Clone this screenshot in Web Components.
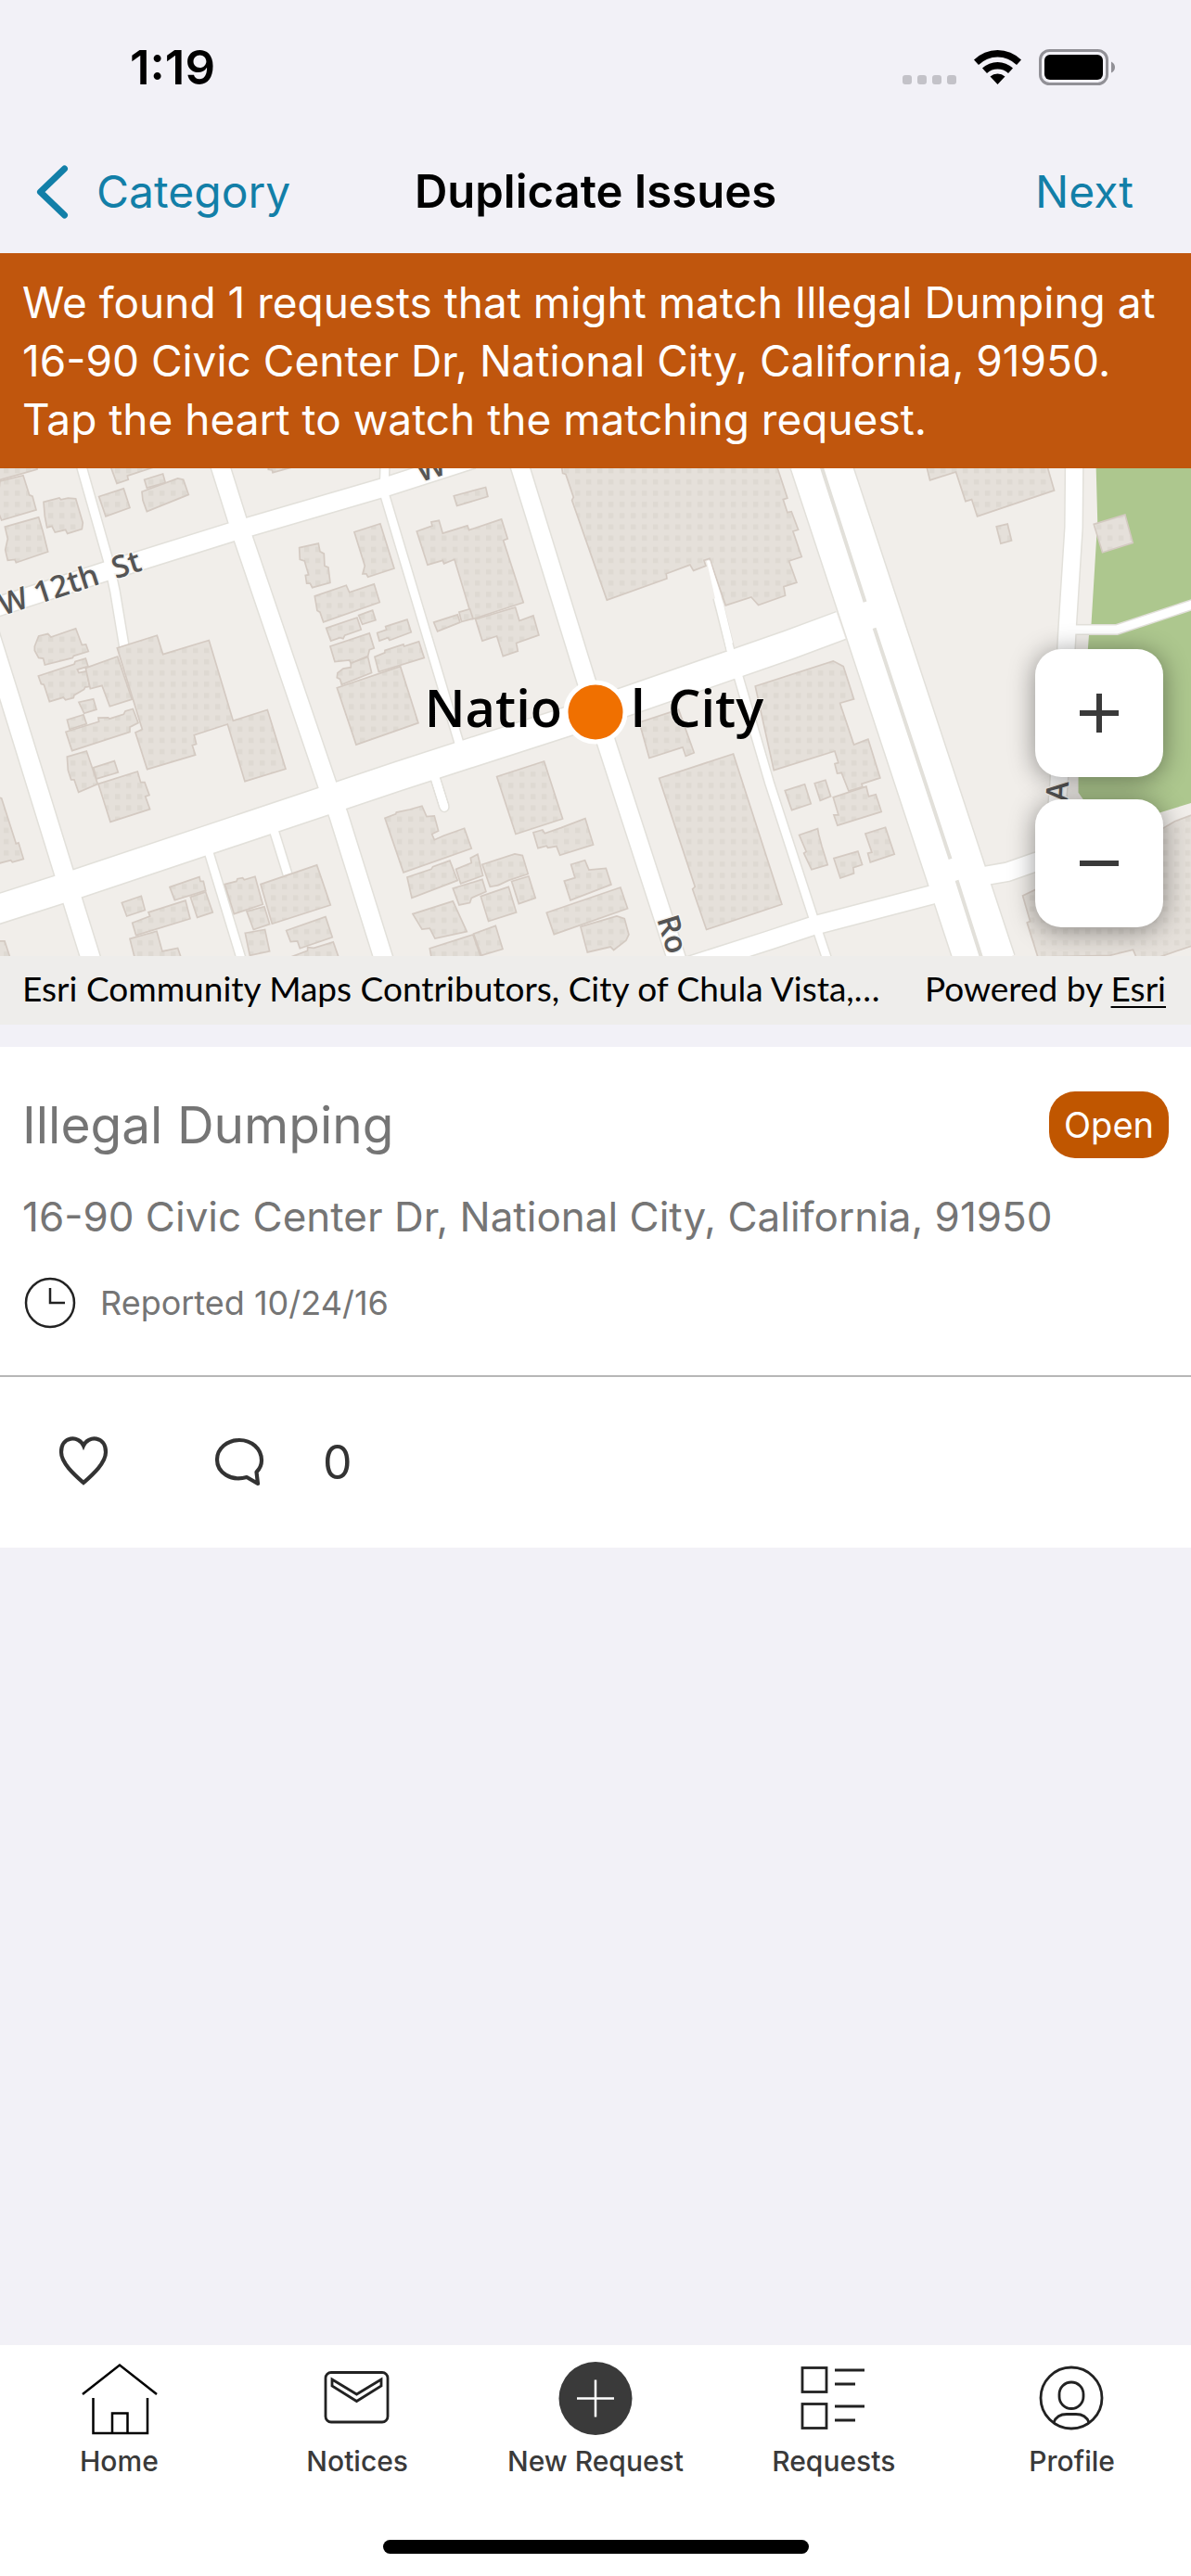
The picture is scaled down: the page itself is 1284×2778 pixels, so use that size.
<!DOCTYPE html>
<html lang="en">
<head>
<meta charset="utf-8">
<meta name="viewport" content="width=device-width, initial-scale=1">
<title>Duplicate Issues</title>
<style>
  body {
    margin: 0;
    font-family: Inter, "Liberation Sans", sans-serif;
    background: #f2f1f7;
    color: #000;
  }
</style>
</head>
<body>
<issue-app></issue-app>

<script>
const define = (name, html) => {
  const template = document.createElement('template');
  template.innerHTML = html;
  customElements.define(name, class extends HTMLElement {
    constructor() {
      super();
      this.attachShadow({ mode: 'open' }).append(template.content.cloneNode(true));
    }
  });
};

/* Clock, signal, wifi and battery */
define('status-bar', `
<style>
  :host { display: flex; align-items: center; justify-content: space-between; height: 146px; padding: 0 82px 0 140px; }
  time { font-size: 51px; font-weight: 600; line-height: 60px; }
  svg { display: block; }
</style>
<time>1:19</time>
<svg width="230" height="40" viewBox="972 53 230 40" aria-label="Wi-Fi on, battery full" role="img">
  <g fill="#c3c2c8"><rect x="973" y="81" width="10" height="10" rx="3"/><rect x="989" y="81" width="10" height="10" rx="3"/><rect x="1005" y="81" width="10" height="10" rx="3"/><rect x="1021" y="81" width="10" height="10" rx="3"/></g>
  <path d="M1050 64.500A36 36 0 0 1 1101 64.500L1096 70A29 29 0 0 0 1055 70ZM1059 73.500A24 24 0 0 1 1092 73.500L1087 79A17 17 0 0 0 1064 79ZM1067.500 82.500A12 12 0 0 1 1083.500 82.500L1075.500 91Z"/>
  <rect x="1121.500" y="54.500" width="72" height="36" rx="10" fill="none" stroke="#919096" stroke-width="3"/>
  <rect x="1126" y="59" width="63" height="27" rx="6"/>
  <path d="M1198 66.500Q1202 68.500 1202 72.500Q1202 76.500 1198 78.500Z" fill="#919096"/>
</svg>`);

define('nav-header', `
<style>
  :host { display: grid; grid-template-columns: 1fr auto 1fr; align-items: center; height: 127px; padding: 0 38px 6px; box-sizing: border-box; }
  a, button { font: inherit; font-size: 48px; line-height: 60px; color: #127fa8; text-decoration: none; background: none; border: 0; padding: 0; }
  a { display: flex; align-items: center; gap: 30px; justify-self: start; }
  h1 { margin: 0; font-size: 49px; line-height: 60px; font-weight: 600; }
  button { justify-self: end; padding-right: 24px; }
</style>
<a href="#category"><svg width="36" height="60" viewBox="0 0 36 60" fill="none" stroke="currentColor" stroke-width="7" stroke-linecap="round" stroke-linejoin="round"><path d="M31.500 5L5.500 30L31.500 55"/></svg><slot name="back"></slot></a>
<h1><slot></slot></h1>
<button type="button"><slot name="next"></slot></button>`);

define('alert-banner', `
<style>
  :host { display: block; box-sizing: border-box; padding: 22px 24px 21px; background: #c0560d; color: #fff; }
  p { margin: 0; font-size: 46px; line-height: 63px; }
</style>
<p><slot></slot></p>`);

/* Street map. Shapes are in map units: 3 per pixel across, 2.904 down. */
const building = pts => `<path d="M${pts}Z"/>`;
const west = [
 '-5 0 -5 52 120 18 120 0','0 55 75 37 95 98 105 102 117 145 5 177 -10 140','141 120 192 107 197 113 220 108 245 110 268 185 265 205 218 219 212 207 178 215 168 196 152 200 145 165',
 '16 198 125 168 138 210 155 276 52 310 48 300 25 303 17 270 25 235','360 0 360 15 378 62 415 50 412 38 495 12 495 0','320 103 400 78 420 138 342 165','467 50 527 32 535 60 475 76',
 '459 88 575 46 593 50 610 97 475 150 462 115','868 0 868 18 880 20 882 28 950 10 950 0','112 572 125 540 155 533 165 543 245 516 265 568 278 566 286 588 238 602 235 608 145 630 140 610 125 608 112 585',
 '124 665 240 628 243 620 277 610 285 635 250 645 255 655 280 650 290 698 275 700 272 707 240 725 238 733 212 740 205 732 160 745 142 692 133 690','277 640 380 604 427 738 355 760 330 695 292 705',
 '379 577 508 538 527 597 676 553 754 805 865 771 924 956 792 995 736 816 628 850 635 878 622 882 632 912 476 957 438 842 460 832','255 747 302 737 312 770 272 782','217 802 270 786 280 815 225 832',
 '213 840 320 808 318 796 350 795 354 799 400 785 405 775 430 768 447 812 420 825 420 840 233 899','217 918 280 900 316 1003 254 1029 240 990 230 990 220 960','302 952 370 931 382 967 312 987',
 '318 1003 445 964 455 998 468 998 483 1038 470 1042 485 1082 357 1122','-5 1045 5 1048 52 1190 60 1187 76 1238 40 1248 35 1242 -5 1252','968 263 1030 250 1035 275 1048 282 1050 320 1062 325 1068 373 1010 388 1003 375 992 375 988 350 998 348 985 305 970 300',
 '1146 214 1230 188 1275 328 1190 355 1185 345 1173 345 1180 320','1018 415 1120 381 1130 403 1210 377 1228 434 1046 496 1035 465 1026 460','1055 515 1155 482 1168 520 1115 538 1110 548 1100 545 1070 555','1160 475 1205 459 1215 490 1172 503',
 '1068 572 1195 531 1210 578 1195 583 1190 603 1135 625 1130 615 1083 620','1092 655 1110 642 1135 638 1135 625 1190 605 1202 655 1105 692 1100 675 1090 670','1090 702 1295 635 1353 812 1152 880',
 '394 1375 457 1354 469 1398 410 1417','549 1326 645 1294 648 1308 658 1308 665 1337 565 1367','616 1357 665 1341 688 1405 638 1421','428 1438 485 1417 480 1405 600 1368 615 1425 440 1477','420 1488 507 1464 525 1527 575 1517 585 1545 435 1545',
 '727 1317 765 1308 768 1300 785 1297 790 1303 825 1293 850 1380 757 1410','843 1317 1025 1257 1069 1382 880 1441','798 1402 855 1387 872 1442 820 1459','793 1470 857 1459 872 1527 808 1540',
 '926 1462 1053 1419 1075 1483 970 1518 962 1495 940 1497','940 1545 995 1525 995 1515 1015 1517 1078 1498 1095 1545','-5 1495 15 1495 32 1545 -5 1545'];
const centre = [
 '20 530 50 520 47 510 117 488 130 528 60 553 55 545 27 555','12 605 45 592 45 585 105 566 107 572 155 557 172 608 25 652','45 1110 80 1097 82 1092 125 1083 165 1072 180 1105 205 1103 218 1150 197 1160 205 1178 235 1165 302 1142 325 1205 105 1280',
 '268 101 371 74 378 103 278 132','148 212 198 195 195 183 220 178 232 218 312 194 317 208 422 174 442 235 428 240 493 435 328 487 270 300 236 313 232 303 183 317','338 487 467 450 480 492 525 476 543 537 470 562 475 587 427 603 407 540 360 555',
 '203 497 280 473 288 497 215 525','285 465 320 455 330 485 293 495','615 0 620 30 630 33 655 105 650 115 763 427 957 360 955 345 1032 317 1043 335 1083 320 1077 303 1095 297 1147 444 1230 418 1253 443 1340 413 1335 385 1377 372 1352 305 1393 292 1365 212 1382 207 1360 150 1347 153 1333 112 1347 108 1310 0',
 '868 810 995 770 1045 905 1018 916 1008 888 900 922','932 985 1172 909 1329 1380 1085 1459 1040 1332 1048 1325','407 980 560 932 620 1112 468 1160','525 1155 555 1147 562 1158 615 1140 693 1111 719 1193 611 1226 600 1198 572 1203 568 1197 540 1204',
 '647 1255 692 1242 705 1272 760 1267 777 1318 645 1367 625 1307 660 1297','568 1406 807 1327 830 1393 592 1474','678 1450 795 1417 820 1425 834 1475 825 1493 785 1523 775 1513 700 1530','117 1295 195 1270 200 1262 255 1243 280 1305 132 1360',
 '275 1270 325 1250 322 1235 345 1223 362 1290 290 1315','360 1255 465 1222 490 1227 508 1285 445 1305 412 1320 385 1325','265 1330 360 1302 372 1340 325 1360 320 1375 285 1382','455 1308 510 1292 532 1360 478 1378','355 1355 445 1325 470 1405 380 1433',
 '135 1410 265 1370 310 1465 207 1487 190 1455 165 1458','190 1518 330 1475 355 1545 195 1545','332 1472 403 1447 426 1520 357 1540'];
const east = [
 '-47 697 205 618 238 635 272 737 227 750 272 880 318 863 357 984 297 1003 300 1012 255 1025 232 968 218 970 210 940 222 937 210 900 13 960','505 0 518 52 602 26 633 118 653 112 671 165 920 84 895 0','733 197 769 189 782 241 747 250','1048 190 1149 160 1174 248 1076 278',
 '49 1024 113 1004 133 1065 71 1085','145 1001 180 991 197 1042 163 1055','205 1045 312 1011 320 1042 343 1036 361 1090 219 1133 207 1100 222 1100','95 1163 155 1143 158 1160 168 1197 187 1256 135 1271 110 1220 118 1215','309 1159 374 1139 403 1223 325 1248 317 1220 330 1217',
 '207 1236 285 1214 299 1256 270 1265 272 1283 228 1298','867 1545 832 1437 842 1433 818 1353 1272 1142 1310 1120 1380 1095 1380 1505 1260 1545 1185 1545 1175 1522 1100 1540'];
const streets = [
 [57,'M-30 455L350 335L780 205L1240 75L1530 -15'],[60,'M-80 390L33 738L208 1285L300 1570'],[58,'M705 -15L775 200L1060 1010L1095 1100L1247 1570'],
 [57,'M1674 -15L1896 680L1960 870L2195 1570'],[88,'M-30 1402L220 1325L1060 1053L1290 978L1860 800L2550 568L2720 507'],
 [56,'M2180 1588L2490 1492L2630 1447L3015 1350L3110 1308L3190 1290L3260 1278L3352 1247L3440 1215'],[190,'M2649 -15L3190 1570'],
 [54,'M3475 -15L3473 200L3452 520L3425 1000L3405 1230'],[28,'M258 -10L352 310L372 400L402 575'],[26,'M1245 10L1242 90L1485 875'],[26,'M1400 960L1437 1075'],[26,'M670 1200L785 1565'],[26,'M880 1130L930 1285'],
 [26,'M2368 600L2388 665L2490 1003L2630 1420L2680 1565'],[26,'M3475 520L3612 520L3880 434'],[22,'M2320 420L2372 620']];
const draw = extra => streets.map(([w, d]) => `<path stroke-width="${w + extra}" d="${d}"/>`).join('');

define('street-map', `
<style>
  :host { display: block; overflow: hidden; background: #f1eeea; }
  svg { display: block; width: 100%; height: 100%; }
  text { font-family: "Open Sans", "Noto Sans", sans-serif; font-weight: 600; paint-order: stroke; stroke: #f6f4f1; stroke-width: 3; }
  .street { font-size: 33px; fill: #555; }
  .city { font-size: 56px; fill: #000; stroke-width: 1; }
</style>
<svg viewBox="0 0 1284 526" preserveAspectRatio="xMidYMid slice" role="img" aria-label="Map of National City">
  <defs><pattern id="dots" width="36" height="35.200" patternUnits="userSpaceOnUse"><rect width="36" height="36" fill="#e5e0da"/><rect x="12" y="14" width="16" height="16" fill="#ded9d2"/></pattern></defs>
  <g transform="matrix(.3333 0 0 .34439 0 -5)">
    <path fill="#adc78e" d="M3545 0L3550 180L3530 500L3522 540L3488 985L3488 1030L3510 1060L3700 1110L3760 1090L3880 1055V0Z"/>
    <g fill="none" stroke="#e2e0da" stroke-linejoin="round">${draw(9)}<path stroke-linecap="round" stroke-width="35" d="M1400 960L1437 1075"/></g>
    <g fill="none" stroke="#fff" stroke-linejoin="round">${draw(0)}<path stroke-linecap="round" stroke-width="26" d="M1400 960L1437 1075"/></g>
    <g fill="none" stroke="#e2e0da" stroke-width="12"><path d="M2649 -15L2798 433M2828 515L3074 1238M3095 1305L3182 1570"/></g>
    <g fill="url(#dots)" stroke="#d4cac2" stroke-width="5">
      ${west.map(building).join('')}
      <g transform="translate(1200 0)">${centre.map(building).join('')}</g>
      <g transform="translate(2490 0)">${east.map(building).join('')}</g>
    </g>
    <path fill="#fff" d="M2286 305L2296 303L2340 440L2370 560L2352 588Z"/>
  </g>
  <text class="street" transform="translate(3 159) rotate(-18)">W 12th <tspan dx="8">St</tspan></text>
  <text class="street" transform="translate(453 15) rotate(-17)">W</text>
  <text class="street" transform="translate(708 486) rotate(73)">Ro</text>
  <text class="street" transform="translate(1151 360) rotate(-87)">A</text>
  <text class="city" x="606" y="279" text-anchor="end">Natio</text>
  <text class="city" x="680" y="279">l</text>
  <text class="city" x="720" y="279">City</text>
  <circle cx="642" cy="263" r="32" fill="#f07000" stroke="#fff" stroke-width="5"/>
</svg>`);

define('zoom-controls', `
<style>
  :host { display: flex; flex-direction: column; gap: 24px; }
  button { display: grid; place-items: center; width: 138px; height: 138px; padding: 0; border: 0; border-radius: 28px; background: #fff; box-shadow: 0 3px 28px rgba(0,0,0,.42); }
</style>
<button type="button" aria-label="Zoom in"><svg width="42" height="42" viewBox="0 0 42 42" stroke="#3a3a3a" stroke-width="6"><path d="M0 21H42M21 0V42"/></svg></button>
<button type="button" aria-label="Zoom out"><svg width="42" height="42" viewBox="0 0 42 42" stroke="#3a3a3a" stroke-width="6"><path d="M0 21H42"/></svg></button>`);

define('issue-map', `
<style>
  :host { display: block; position: relative; overflow: hidden; }
  street-map { height: 526px; }
  zoom-controls { position: absolute; right: 30px; bottom: 105px; }
  footer { position: relative; display: flex; justify-content: space-between; align-items: center; box-sizing: border-box; height: 74px; padding: 0 27px 4px 24px; background: #eeedeb; font: 37px/44px Lato, "Open Sans", sans-serif; gap: 24px; }
  span { white-space: nowrap; }
  a { color: inherit; text-underline-offset: 5px; text-decoration-thickness: 2px; }
</style>
<street-map></street-map>
<zoom-controls></zoom-controls>
<footer><span>Esri Community Maps Contributors, City of Chula Vista,…</span><span>Powered by <a href="#esri">Esri</a></span></footer>`);

define('request-card', `
<style>
  :host { display: block; margin-top: 24px; background: #fff; color: #757575; }
  .details { padding: 48px 24px 48px; border-bottom: 2px solid #b7b7b7; }
  header { display: flex; justify-content: space-between; align-items: center; }
  h2 { margin: 0; font-size: 55px; line-height: 72px; font-weight: 400; }
  .badge { padding: 0 16px; border-radius: 28px; background: #c05600; color: #fff; font-size: 38px; line-height: 72px; }
  p { margin: 36px 0 0; font-size: 44px; line-height: 54px; }
  .reported { display: flex; align-items: center; gap: 24px; margin-top: 36px; font-size: 36px; line-height: 60px; }
  .actions { display: flex; align-items: center; height: 184px; padding: 0 60px; color: #333; }
  button { display: flex; align-items: center; gap: 60px; padding: 0; border: 0; background: none; font: inherit; font-size: 50px; line-height: 60px; color: inherit; }
  button + button { margin-left: 108px; }
  svg { display: block; fill: none; }
</style>
<div class="details">
  <header><h2><slot name="title"></slot></h2><span class="badge"><slot name="status"></slot></span></header>
  <p><slot name="address"></slot></p>
  <div class="reported"><svg width="60" height="60" viewBox="0 0 60 60" stroke="#222" stroke-width="2.500"><circle cx="30" cy="30" r="26"/><path d="M30 14V30H46"/></svg><slot name="reported"></slot></div>
</div>
<div class="actions">
  <button type="button" aria-label="Watch this request"><svg width="60" height="60" viewBox="0 0 60 60" stroke="currentColor" stroke-width="4.200"><path d="M30 52C21 44 6 31 6 19C6 1.500 25 .5 30 12C35 .5 54 1.500 54 19C54 31 39 44 30 52Z"/></svg></button>
  <button type="button"><svg width="60" height="60" viewBox="0 0 60 60" stroke="currentColor" stroke-width="4.200" stroke-linejoin="round"><path d="M38 46C21 51 6 41 6 27C6 15 17 6 30 6C43 6 54 15 54 28C54 33 52 37 48.500 40.500L50 53Z"/></svg><slot name="comments"></slot></button>
</div>`);

const icons = {
  home: '<g stroke="#000" stroke-width="2.500"><path d="M5 36L45 4.500L85 36M16.500 40V78H75V40M37 78V56.500H53.500V78"/></g>',
  notices: '<g stroke="#222" stroke-width="2.800"><rect x="10" y="12.500" width="67" height="53.500" rx="6"/><path stroke-miterlimit="12" d="M17 20L43.500 36L70 20V27L43.500 43.500L17 27Z"/></g>',
  add: '<circle cx="44" cy="40.500" r="39.500" fill="#3a3a3a"/><path stroke="#fff" stroke-width="2.500" d="M24 40.500H64M44 20.500V60.500"/>',
  requests: '<g stroke="#222" stroke-width="2.800"><rect x="10" y="7.500" width="26" height="26"/><rect x="10" y="46.500" width="26" height="26"/><path d="M45 10H77M45 25H67M45 49H77M45 64H67"/></g>',
  profile: '<g stroke="#222" stroke-width="2.800"><circle cx="43" cy="40" r="33"/><rect x="30" y="23" width="26" height="28.500" rx="13"/><path d="M24 66.500C27 58.500 33 57.500 38 57.500H48C53 57.500 59 58.500 62 66.500"/></g>'
};

customElements.define('tab-item', class extends HTMLElement {
  constructor() {
    super();
    this.attachShadow({ mode: 'open' }).innerHTML = `
<style>
  :host { display: block; flex: 1 1 0; }
  a { display: flex; flex-direction: column; align-items: center; gap: 5px; color: #3a3a3a; text-decoration: none; font-size: 30px; font-weight: 500; line-height: 42px; white-space: nowrap; }
  svg { display: block; }
</style>
<a href="#${this.getAttribute('icon')}"><svg width="88" height="82" viewBox="0 0 88 82" fill="none">${icons[this.getAttribute('icon')]}</svg><slot></slot></a>`;
  }
});

define('tab-bar', `
<style>
  :host { display: block; box-sizing: border-box; height: 249px; padding-top: 17px; background: #fff; }
  nav { display: flex; }
  i { display: block; width: 459px; height: 15px; margin: 64px auto 0; border-radius: 8px; background: #000; }
</style>
<nav><tab-item icon="home">Home</tab-item><tab-item icon="notices">Notices</tab-item><tab-item icon="add">New Request</tab-item><tab-item icon="requests">Requests</tab-item><tab-item icon="profile">Profile</tab-item></nav>
<i></i>`);

define('issue-app', `
<style>
  :host { display: flex; flex-direction: column; min-height: 100vh; }
  main { flex: 1; }
</style>
<status-bar></status-bar>
<nav-header><span slot="back">Category</span>Duplicate Issues<span slot="next">Next</span></nav-header>
<main>
  <alert-banner>We found 1 requests that might match Illegal Dumping at 16-90 Civic Center Dr, National City, California, 91950. Tap the heart to watch the matching request.</alert-banner>
  <issue-map></issue-map>
  <request-card>
    <span slot="title">Illegal Dumping</span>
    <span slot="status">Open</span>
    <span slot="address">16-90 Civic Center Dr, National City, California, 91950</span>
    <span slot="reported">Reported 10/24/16</span>
    <span slot="comments">0</span>
  </request-card>
</main>
<tab-bar></tab-bar>`);
</script>
</body>
</html>
